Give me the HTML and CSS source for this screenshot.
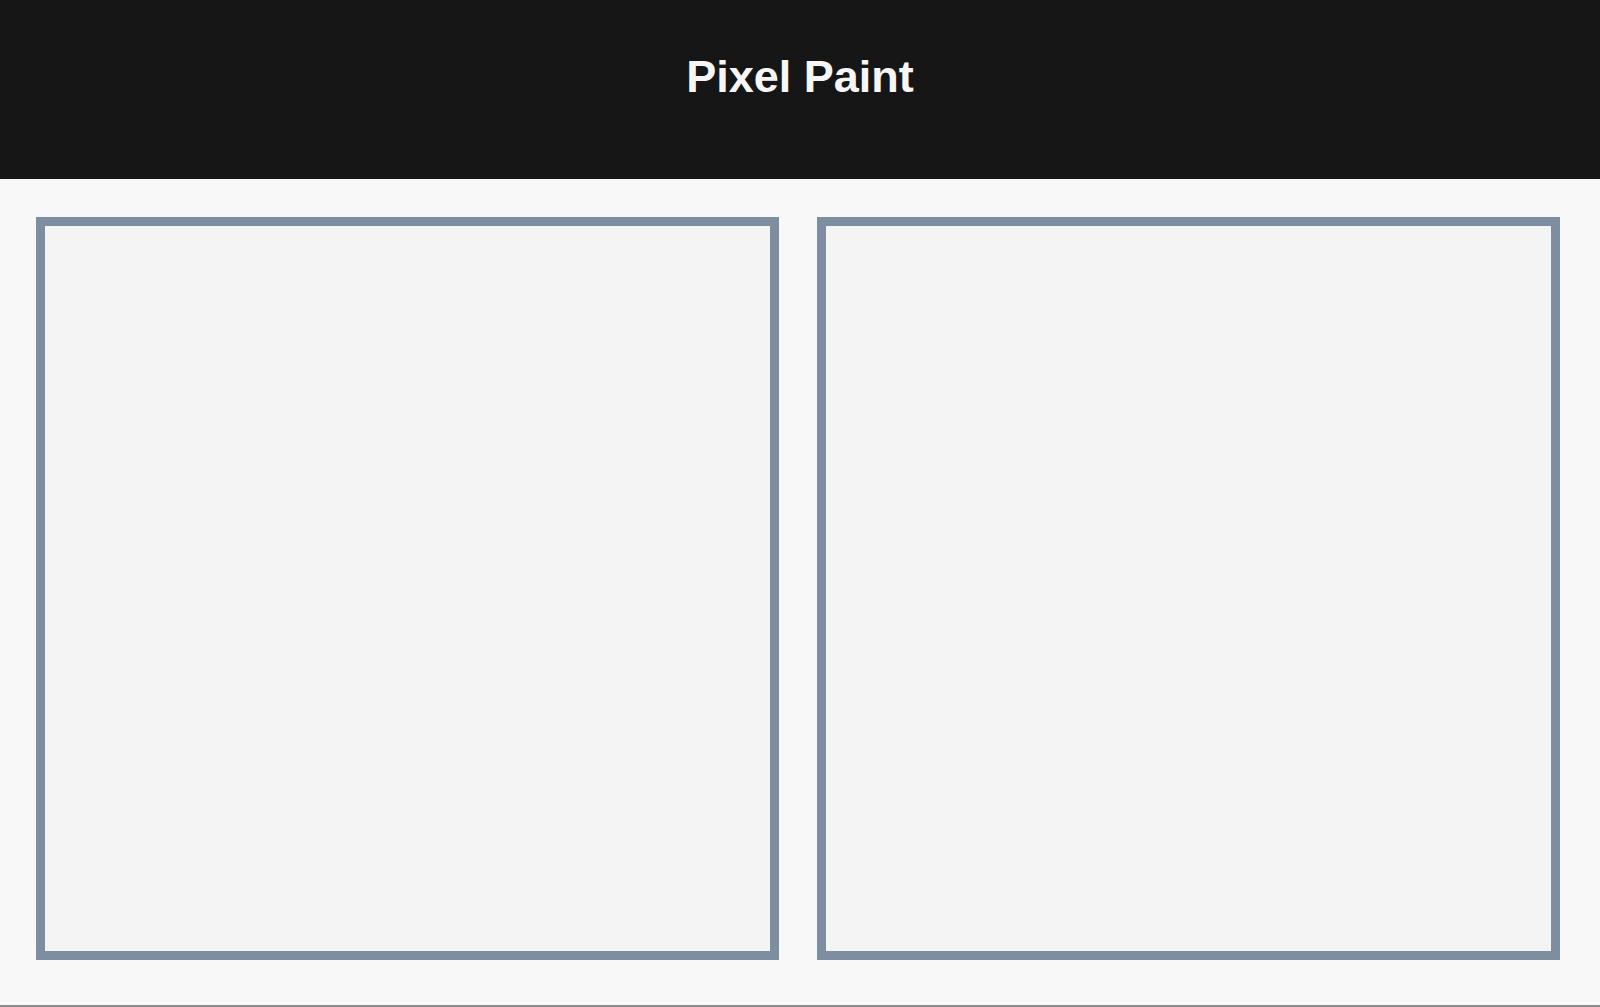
FILE: index.html
```html
<!DOCTYPE html>
<html lang="en">
<head>
<meta charset="utf-8">
<title>Pixel Paint</title>
<link rel="stylesheet" href="styles.css">
</head>
<body>
<header class="top-bar">
  <h1 class="title">Pixel Paint</h1>
</header>
<main class="workspace">
  <div class="canvas-frame"></div>
  <div class="canvas-frame"></div>
</main>
</body>
</html>
```

FILE: styles.css
```css
html, body {
  margin: 0;
  padding: 0;
}
body {
  background: #f8f8f8;
  font-family: "Liberation Sans", Arial, sans-serif;
  height: 100vh;
  display: flex;
  flex-direction: column;
  box-sizing: border-box;
}
.top-bar {
  background: #161616;
  height: 179px;
  box-sizing: border-box;
  padding-top: 51px;
  flex: none;
}
.title {
  margin: 0;
  text-align: center;
  color: #f6f6f6;
  font-size: 45px;
  font-weight: bold;
  line-height: normal;
}
.workspace {
  flex: 1;
  display: flex;
  gap: 38px;
  padding: 38px 0 0 36px;
  border-bottom: 2px solid #8a8a8a;
}
.canvas-frame {
  width: 743px;
  height: 743px;
  box-sizing: border-box;
  border: 9px solid #7d8ea1;
  background: #f4f4f4;
  flex: none;
}
```
